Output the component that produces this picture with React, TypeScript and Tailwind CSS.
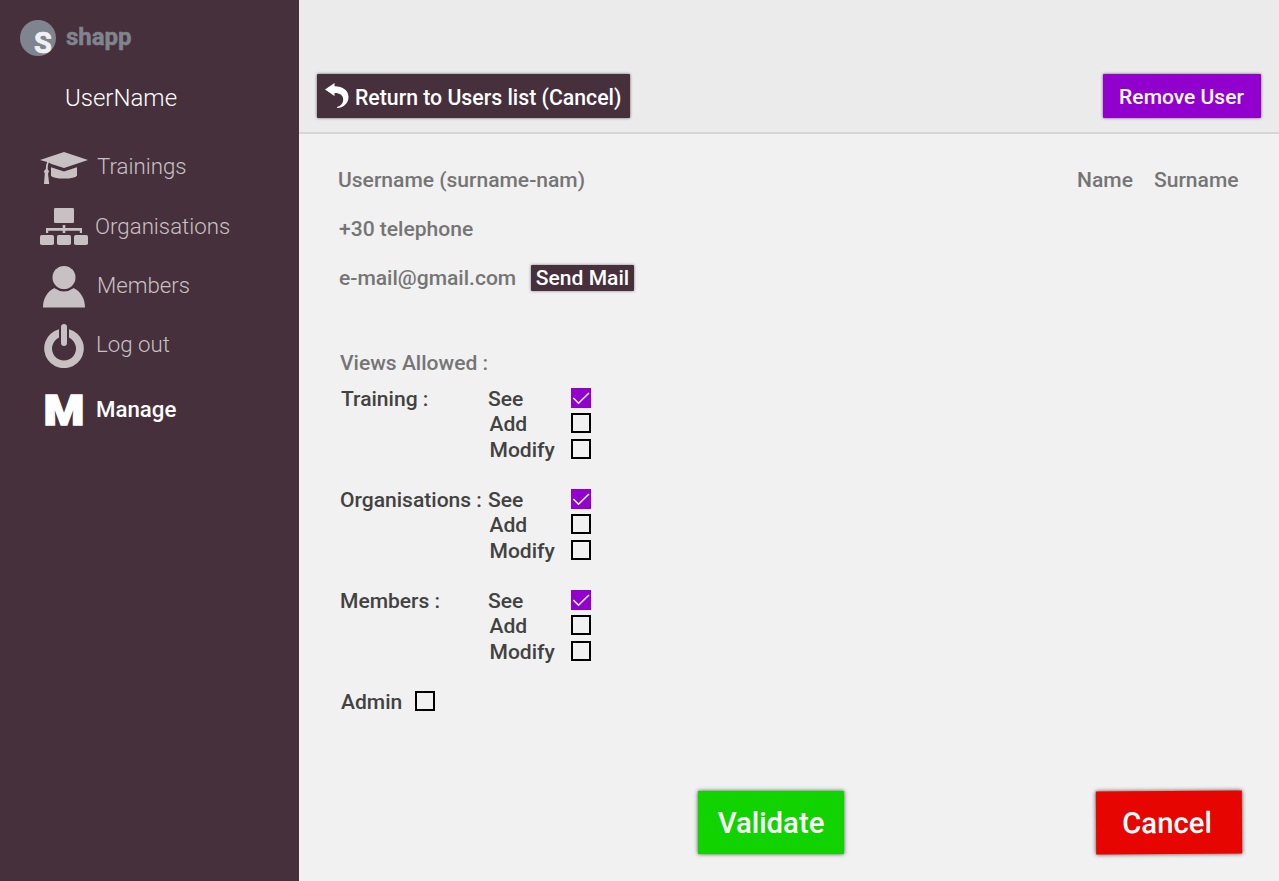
import type { ReactNode } from "react";

function CapIcon() {
  return (
    <svg className="mt-[5px] h-9 w-12 shrink-0" viewBox="0 0 48 36" fill="currentColor">
      <path d="M0 8 24 0l24 8-24 8L11.500 12 8.800 10.500Q7.800 12 7.700 17l1.300 2.500-1 2 1.200 10.500H4l.8-10.500-1-2L5.800 17Q6 12 7.200 10Z" />
      <path d="m11 15.200 13 4.300 13-4.300v8.600q-2 2.800-13 2.800T11 23.800Z" />
    </svg>
  );
}

function SitemapIcon() {
  return (
    <svg className="-mt-[2px] h-[37px] w-12 shrink-0" viewBox="0 0 48 37" fill="currentColor">
      <rect x="14" width="20" height="15" rx="1.200" />
      <path d="M22.700 17h2.600v3H42v5h-2.200v-2.200H25.300V25h-2.600v-2.200H8.200V25H6v-5h16.700Z" />
      <rect y="27" width="14" height="10" rx="1.800" />
      <rect x="17" y="27" width="14" height="10" rx="1.800" />
      <rect x="34" y="27" width="14" height="10" rx="1.800" />
    </svg>
  );
}

function PersonIcon() {
  return (
    <svg className="mt-[2px] h-[42px] w-12 shrink-0" viewBox="0 0 48 42" fill="currentColor">
      <circle cx="24" cy="11.500" r="11.500" />
      <path d="M3 41.500C3 33 7 25.500 14.500 22q9.500 7 19 0C41 25.500 45 33 45 41.500Z" />
      <path d="M13.500 20.500q10.500 8 21 0" fill="none" stroke="#46303b" strokeWidth="1.200" />
    </svg>
  );
}

function PowerIcon() {
  return (
    <svg className="h-[44px] w-12 shrink-0" viewBox="0 0 48 44" fill="currentColor">
      <rect x="21" y="0" width="6" height="22" rx="3" />
      <path d="M19 5.200A19.800 19.800 0 1 0 29 5.200V13.600A12 12 0 1 1 19 13.600Z" />
    </svg>
  );
}

function ReturnIcon() {
  return (
    <svg className="-mt-[2px] h-[25px] w-6 shrink-0" viewBox="0 0 24 25" fill="currentColor">
      <path d="M0 6.500 9.500 0v3.200C18 3.200 23.500 7.500 23.500 14c0 6-4.500 10.500-11.300 11l-.2-1c4-1 6.200-4 6.200-7.500 0-4-3-6.500-8.700-6.500v3Z" />
    </svg>
  );
}

function NavItem({ icon, children, className }: { icon: ReactNode; children: ReactNode; className: string }) {
  return (
    <a className={`flex items-center whitespace-nowrap text-[22.250px] font-light leading-[26px] text-[#c8c1c4] ${className}`}>
      {icon}
      <span className="pb-[3px]">{children}</span>
    </a>
  );
}

function Checkbox({ checked = false }: { checked?: boolean }) {
  return checked ? (
    <span className="-mt-px flex size-5 shrink-0 bg-[#9100cd]">
      <svg className="size-5" viewBox="0 0 20 20" fill="none" stroke="white" strokeWidth="1.500">
        <path d="m2.300 10 5.200 5.300L18 5" />
      </svg>
    </span>
  ) : (
    <span className="-mt-px size-5 shrink-0 border-2 border-black" />
  );
}

function Permissions({ label }: { label: string }) {
  return (
    <section className="flex h-[101px] text-[#424242]">
      <h3 className={label === "Training :" ? "w-[147px] pl-px" : "w-[147px]"}>{label}</h3>
      <div className="flex flex-col pl-px">
        <div className="flex h-[25px] items-start">
          <span className="w-[83px]">See</span>
          <Checkbox checked />
        </div>
        <div className="flex h-[26px] items-start">
          <span className="w-[83px] pl-[1.500px]">Add</span>
          <Checkbox />
        </div>
        <div className="flex h-[25px] items-start">
          <span className="w-[83px] pl-[1.500px]">Modify</span>
          <Checkbox />
        </div>
      </div>
    </section>
  );
}

export default function App() {
  return (
    <div className="flex h-[881px] w-[1279px] overflow-hidden bg-[#f1f1f1] font-['Roboto',sans-serif] text-[21.050px] font-medium leading-5">
      <aside className="flex w-[299px] shrink-0 flex-col bg-[#46303b]">
        <div className="flex h-[76px] items-center pl-5">
          <div className="flex size-9 items-center justify-center rounded-full bg-[#80848e] pl-[10px] pt-[11px] text-[29px] font-bold leading-none text-[#eff1f5] [-webkit-text-stroke:0.7px_#eff1f5]">
            S
          </div>
          <span className="pb-[2px] pl-[10px] text-[24px] font-bold leading-7 text-[#80848e] [-webkit-text-stroke:0.5px_#80848e]">shapp</span>
        </div>
        <div className="h-[62px] pl-[65px] pt-2 text-[24px] font-light leading-7 text-white">UserName</div>
        <nav className="flex flex-col pl-10">
          <NavItem icon={<CapIcon />} className="h-[58px] gap-[9px]">Trainings</NavItem>
          <NavItem icon={<SitemapIcon />} className="mt-[2px] h-[58px] gap-[7px]">Organisations</NavItem>
          <NavItem icon={<PersonIcon />} className="h-[60px] gap-[9px]">Members</NavItem>
          <NavItem icon={<PowerIcon />} className="h-[59px] gap-2">Log out</NavItem>
          <a className="flex h-[70px] items-center gap-2 text-[22.250px] font-medium leading-[26px] text-white">
            <span className="w-12 scale-x-[1.100] pt-px text-center text-[42px] font-black [-webkit-text-stroke:1.700px_white]">M</span>
            <span className="pb-[2px]">Manage</span>
          </a>
        </nav>
      </aside>
      <main className="flex flex-1 flex-col">
        <header className="flex h-[134px] items-end justify-between border-b-2 border-[#d5d5d5] bg-[#ebebeb] pb-[14px] pl-[18px] pr-[18px] text-white">
          <button className="flex h-11 w-[313px] items-center gap-[6px] rounded-[1px] bg-[#46303b] pl-2 shadow-[0_0_3px_rgba(0,0,0,0.6)]">
            <ReturnIcon />
            <span className="whitespace-nowrap pt-[3px] text-[21.250px]">Return to Users list (Cancel)</span>
          </button>
          <button className="h-11 w-[158px] rounded-[1px] bg-[#9100cd] pr-px pt-[2px] shadow-[0_0_3px_rgba(0,0,0,0.6)]">Remove User</button>
        </header>
        <div className="flex flex-1 flex-col pl-[39px] pr-10 pt-9 text-[#757575]">
          <div className="flex h-[49px] justify-between">
            <span>Username (surname-nam)</span>
            <div className="flex gap-[21px] pr-[0.500px]">
              <span>Name</span>
              <span>Surname</span>
            </div>
          </div>
          <div className="h-[49px] pl-px">+30 telephone</div>
          <div className="flex h-[85px] items-start pl-px">
            <span className="w-[192px]">e-mail@gmail.com</span>
            <button className="-mt-[3px] h-[26px] w-[103px] rounded-[1px] bg-[#46303b] text-white shadow-[0_0_3px_rgba(0,0,0,0.5)]">Send Mail</button>
          </div>
          <h2 className="h-9 pl-[2px]">Views Allowed :</h2>
          <div className="flex flex-col pl-[2px]">
            <Permissions label="Training :" />
            <Permissions label="Organisations :" />
            <Permissions label="Members :" />
            <div className="flex pl-px text-[#424242]">
              <span className="w-[74px]">Admin</span>
              <Checkbox />
            </div>
          </div>
        </div>
        <footer className="flex h-[91px] items-start justify-between pl-[399px] pr-[37px] text-[29.300px] text-white">
          <button className="mt-px h-[63px] w-[146px] bg-[#10d300] shadow-[0_0_4px_rgba(0,0,0,0.7)]">Validate</button>
          <button className="mt-px h-[63px] w-[146px] -rotate-[0.35deg] bg-[#e60500] pr-1 shadow-[0_0_4px_rgba(0,0,0,0.7)]">Cancel</button>
        </footer>
      </main>
    </div>
  );
}
